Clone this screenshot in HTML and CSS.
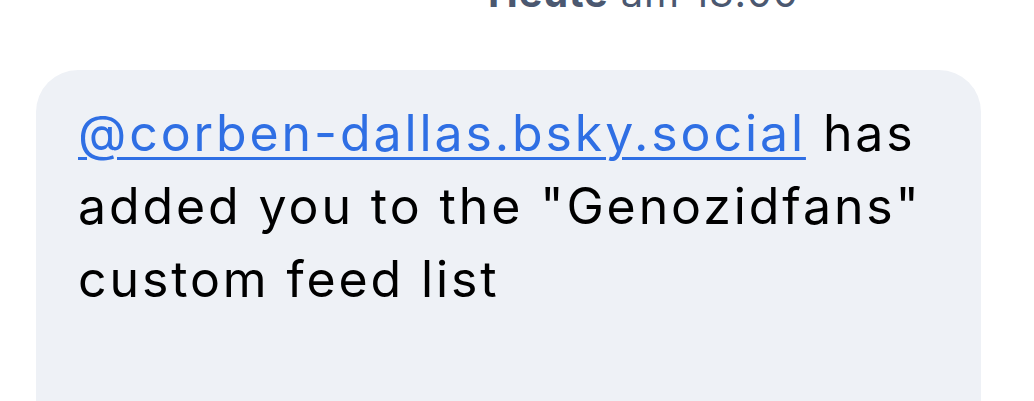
FILE: index.html
```html
<!DOCTYPE html>
<html lang="de">
<head>
  <meta charset="UTF-8">
  <meta name="viewport" content="width=device-width, initial-scale=1.0">
  <title>Nachricht</title>
  <link rel="stylesheet" href="styles.css">
</head>
<body>
  <div class="time"><strong>Heute</strong> am 13:00</div>

  <div class="bubble">
    <p>
      <a href="#">@corben-dallas.bsky.social</a> has
      added you to the "Genozidfans"
      custom feed list
    </p>
  </div>
</body>
</html>
```

FILE: styles.css
```css
body {
  margin: 0;
  height: 401px;
  background: #fff;
  font-family: Inter, "Noto Sans", sans-serif;
  overflow: hidden;
}
.time {
  height: 97px;
  margin-top: -27px;
  padding-left: 488px;
  font-size: 40px;
  line-height: 40px;
  letter-spacing: 0.8px;
  color: #4b5870;
}
.time strong {
  font-weight: 700;
}
.bubble {
  margin-left: 36px;
  width: 945px;
  height: 400px;
  background: #eef1f6;
  border-radius: 42px;
  box-sizing: border-box;
  padding: 27px 40px 0 42px;
}
.bubble p {
  margin: 0;
  font-size: 50px;
  line-height: 73px;
  letter-spacing: 2.9px;
  color: #000;
}
.bubble a {
  color: #2f6fe4;
  text-decoration-thickness: 3px;
  text-underline-offset: 6px;
}
```
